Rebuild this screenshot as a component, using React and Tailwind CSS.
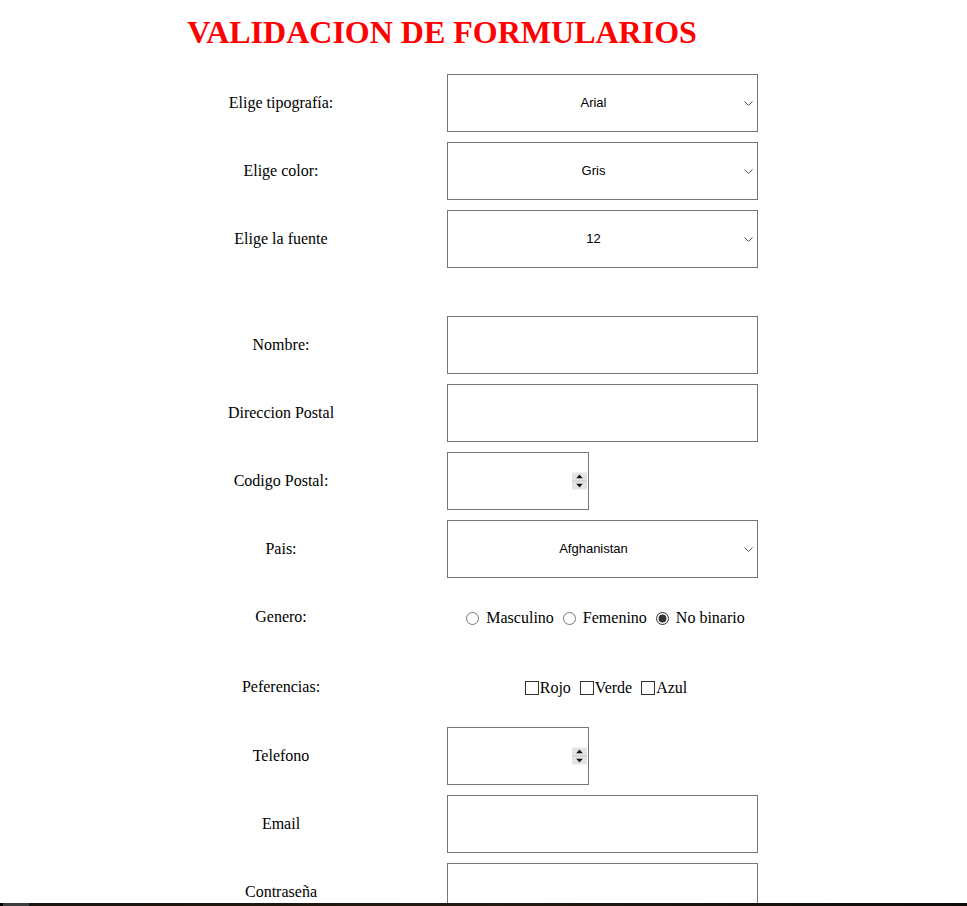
import { useState } from 'react';

const serif = { fontFamily: '"Liberation Serif", "Times New Roman", serif' };

function Chevron() {
  return (
    <svg className="pointer-events-none absolute right-[5px] top-1/2 -mt-[2px]" width="9" height="5" viewBox="0 0 9 5">
      <path d="M0.5 0.5 L4.5 4.5 L8.5 0.5" fill="none" stroke="#555" strokeWidth="1" />
    </svg>
  );
}

function Select({ value, options }) {
  return (
    <div className="relative w-[311px] h-[58px]">
      <select
        defaultValue={value}
        className="appearance-none w-full h-full pr-[18px] border border-[#767676] bg-white text-black text-[13px] text-center [text-align-last:center] outline-none"
        style={{ fontFamily: '"Liberation Sans", Arial, sans-serif' }}
      >
        {options.map((o) => (
          <option key={o}>{o}</option>
        ))}
      </select>
      <Chevron />
    </div>
  );
}

function Spinner() {
  return (
    <div className="absolute right-[1px] top-1/2 -translate-y-1/2 w-[15px] h-[17px] flex flex-col bg-[#e4e4e4]">
      <div className="flex-1 flex items-center justify-center border-b border-[#c8c8c8]">
        <svg width="7" height="4" viewBox="0 0 7 4"><path d="M0 4 L3.5 0 L7 4 Z" fill="#111" /></svg>
      </div>
      <div className="flex-1 flex items-center justify-center">
        <svg width="7" height="4" viewBox="0 0 7 4"><path d="M0 0 L3.5 4 L7 0 Z" fill="#111" /></svg>
      </div>
    </div>
  );
}

function NumberBox() {
  return (
    <div className="relative w-[142px] h-[58px] border border-[#767676] bg-white">
      <Spinner />
    </div>
  );
}

function TextBox() {
  return <input type="text" className="block w-[311px] h-[58px] border border-[#767676] bg-white outline-none" />;
}

function Label({ children }) {
  return <div className="flex items-center justify-center text-[16px] text-black">{children}</div>;
}

export default function App() {
  const [genero, setGenero] = useState('nb');
  const [prefs, setPrefs] = useState({ rojo: false, verde: false, azul: false });

  const toggle = (k) => setPrefs({ ...prefs, [k]: !prefs[k] });

  return (
    <div className="min-h-screen bg-white text-black" style={serif}>
      <div className="ml-[115px] w-[650px]">
        <h1 className="pt-[14px] pl-[4px] text-center text-[32px] leading-[37px] font-bold text-[#ff0000]">VALIDACION DE FORMULARIOS</h1>

        <div className="mt-[23px] grid grid-cols-[332px_318px] gap-y-[10px]">
          <Label>Elige tipografía:</Label>
          <Select value="Arial" options={['Arial', 'Verdana', 'Times New Roman']} />

          <Label>Elige color:</Label>
          <Select value="Gris" options={['Gris', 'Rojo', 'Azul']} />

          <Label>Elige la fuente</Label>
          <Select value="12" options={['10', '12', '14', '16']} />

          <div className="h-[28px]" />
          <div />

          <Label>Nombre:</Label>
          <TextBox />

          <Label>Direccion Postal</Label>
          <TextBox />

          <Label>Codigo Postal:</Label>
          <NumberBox />

          <Label>Pais:</Label>
          <Select value="Afghanistan" options={['Afghanistan', 'Albania', 'Alemania']} />

          <Label>Genero:</Label>
          <div className="h-[58px] flex items-center justify-center pt-[2px] pr-[6px] text-[16px]">
            {[
              ['m', 'Masculino'],
              ['f', 'Femenino'],
              ['nb', 'No binario'],
            ].map(([k, t]) => (
              <label key={k} className="flex items-center mr-[4px] last:mr-0">
                <input
                  type="radio"
                  name="genero"
                  checked={genero === k}
                  onChange={() => setGenero(k)}
                  className="w-[13px] h-[13px] ml-[5px] mr-[7px] accent-[#333]"
                />
                {t}
              </label>
            ))}
          </div>

          <Label>Peferencias:</Label>
          <div className="h-[61px] flex items-center justify-center pt-[2px] text-[16px]">
            {[
              ['rojo', 'Rojo'],
              ['verde', 'Verde'],
              ['azul', 'Azul'],
            ].map(([k, t]) => (
              <label key={k} className="flex items-center mr-[9px] last:mr-0">
                <input
                  type="checkbox"
                  checked={prefs[k]}
                  onChange={() => toggle(k)}
                  className="appearance-none w-[14px] h-[14px] border border-[#333] bg-white m-0 mr-[1px]"
                />
                {t}
              </label>
            ))}
          </div>

          <Label>Telefono</Label>
          <NumberBox />

          <Label>Email</Label>
          <TextBox />

          <Label>Contraseña</Label>
          <input type="password" className="block w-[311px] h-[58px] border border-[#767676] bg-white outline-none" />

          <div className="h-[40px]" />
          <div />
        </div>
      </div>

      <div className="fixed bottom-0 left-0 right-0 h-[3px] flex">
        <div className="w-[3px] bg-black" />
        <div className="w-[26px] bg-[#3c3c3c]" />
        <div className="flex-1 bg-gradient-to-r from-[#1c140e] via-[#241a12] to-[#0e0c0a]" />
      </div>
    </div>
  );
}
